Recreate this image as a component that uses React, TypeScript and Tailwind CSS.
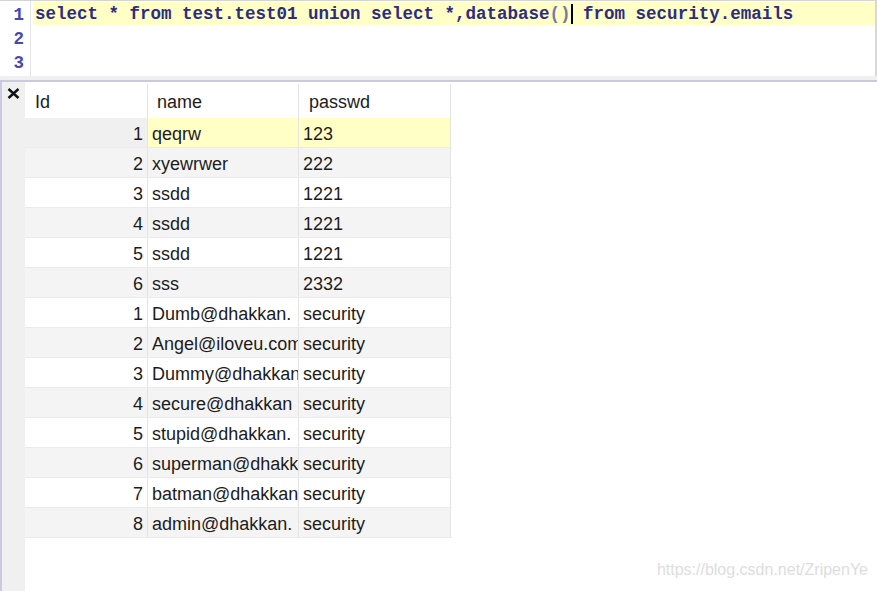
import React from "react";

const rows: [string, string, string][] = [
  ["1", "qeqrw", "123"],
  ["2", "xyewrwer", "222"],
  ["3", "ssdd", "1221"],
  ["4", "ssdd", "1221"],
  ["5", "ssdd", "1221"],
  ["6", "sss", "2332"],
  ["1", "Dumb@dhakkan.", "security"],
  ["2", "Angel@iloveu.com", "security"],
  ["3", "Dummy@dhakkan", "security"],
  ["4", "secure@dhakkan", "security"],
  ["5", "stupid@dhakkan.", "security"],
  ["6", "superman@dhakk", "security"],
  ["7", "batman@dhakkan", "security"],
  ["8", "admin@dhakkan.", "security"],
];

export default function App() {
  const mono = { fontFamily: '"Liberation Mono", "Courier New", monospace' };
  return (
    <div
      className="w-[877px] h-[591px] bg-white relative overflow-hidden flex flex-col"
      style={{ fontFamily: '"Liberation Sans", Arial, sans-serif' }}
    >
      {/* Editor */}
      <div className="h-[76px] flex border-t border-[#d4d4d4] border-r-2 border-r-[#d8d8d8] shrink-0">
        <div
          className="w-[31px] border-r border-[#e4e4e4] flex flex-col pt-[2px] text-[17.5px] font-bold text-[#4848b0] text-right pr-[6px]"
          style={mono}
        >
          <div className="h-[24px] leading-[24px]">1</div>
          <div className="h-[24px] leading-[24px]">2</div>
          <div className="h-[24px] leading-[24px]">3</div>
        </div>
        <div className="flex-1 flex flex-col pt-[1px] pl-[2px]" style={mono}>
          <div className="h-[23px] leading-[23px] bg-[#ffffc6] pl-[2px] pt-[1px] text-[17.5px] font-bold text-[#2c2c84] whitespace-pre flex items-center">
            <span>select * from test.test01 union select *,database</span>
            <span className="text-[#7878a6]">()</span>
            <span className="inline-block w-[2px] h-[20px] bg-black"></span>
            <span> from security.emails</span>
          </div>
        </div>
      </div>
      <div className="h-[4px] bg-[#f0f0f0] shrink-0"></div>
      <div className="h-[2px] bg-[#c9c9e0] shrink-0"></div>

      {/* Results */}
      <div className="flex-1 flex">
        <div className="w-[25px] border-l-2 border-[#c9c9e0] bg-[#f0f0f0] flex justify-center pt-[6px] shrink-0">
          <svg width="13" height="11" viewBox="0 0 13 11">
            <path d="M1.5 1 L11.5 10 M11.5 1 L1.5 10" stroke="#111" strokeWidth="2.4" />
          </svg>
        </div>
        <div className="flex-1 flex flex-col pt-[2px] text-[18px] text-[#1c1c1c]">
          <div className="flex h-[34px] items-center bg-white">
            <div className="w-[123px] h-full border-r border-[#e4e4e4] pl-[10px] pt-[2px] flex items-center">Id</div>
            <div className="w-[151px] h-full border-r border-[#e4e4e4] pl-[9px] pt-[2px] flex items-center">name</div>
            <div className="w-[152px] h-full border-r border-[#e4e4e4] pl-[10px] pt-[2px] flex items-center">passwd</div>
          </div>
          {rows.map((r, i) => {
            const first = i === 0;
            const even = i % 2 === 1;
            const bg = even ? "bg-[#f4f4f4]" : "bg-white";
            return (
              <div key={i} className="flex h-[30px] w-[427px] border-b border-[#ebebeb]">
                <div
                  className={`w-[123px] h-full border-r border-[#e4e4e4] pr-[4px] pt-[3px] flex items-center justify-end ${
                    first ? "bg-[#f0f0f0]" : bg
                  }`}
                >
                  {r[0]}
                </div>
                <div
                  className={`w-[151px] h-full border-r border-[#e4e4e4] pl-[4px] pt-[3px] flex items-center overflow-hidden whitespace-nowrap ${
                    first ? "bg-[#ffffc6]" : bg
                  }`}
                >
                  {r[1]}
                </div>
                <div
                  className={`w-[152px] h-full border-r border-[#e4e4e4] pl-[4px] pt-[3px] flex items-center overflow-hidden whitespace-nowrap ${
                    first ? "bg-[#ffffc6]" : bg
                  }`}
                >
                  {r[2]}
                </div>
              </div>
            );
          })}
        </div>
      </div>
      <div className="absolute right-[9px] bottom-[9px] text-[16px] text-[#dddddd]">
        https://blog.csdn.net/ZripenYe
      </div>
    </div>
  );
}
